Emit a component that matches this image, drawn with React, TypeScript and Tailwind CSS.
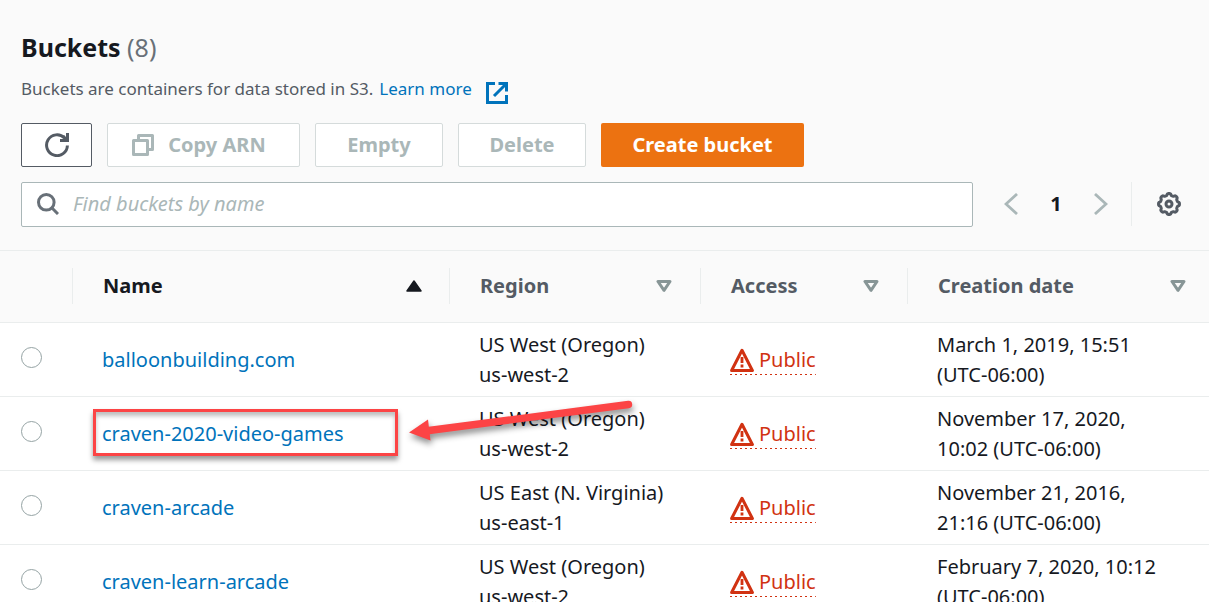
import React from "react";

type Bucket = { name: string; region: string; code: string; created: [string, string]; highlighted?: boolean };

const buckets: Bucket[] = [
  { name: "balloonbuilding.com", region: "US West (Oregon)", code: "us-west-2", created: ["March 1, 2019, 15:51", "(UTC-06:00)"] },
  { name: "craven-2020-video-games", region: "US West (Oregon)", code: "us-west-2", created: ["November 17, 2020,", "10:02 (UTC-06:00)"], highlighted: true },
  { name: "craven-arcade", region: "US East (N. Virginia)", code: "us-east-1", created: ["November 21, 2016,", "21:16 (UTC-06:00)"] },
  { name: "craven-learn-arcade", region: "US West (Oregon)", code: "us-west-2", created: ["February 7, 2020, 10:12", "(UTC-06:00)"] },
];

function RefreshIcon() {
  return (
    <svg className="size-6" viewBox="0 0 24 24" fill="none" stroke="#545b64" strokeWidth="3" aria-hidden="true">
      <path d="M22.4 12.5A10.4 10.4 0 1 1 19.500 5" />
      <path d="M22.500 0V7.500H15" />
      <path d="M18 3L22 7.500" />
    </svg>
  );
}

function CopyIcon() {
  return (
    <svg className="size-[22px] shrink-0" viewBox="0 0 22 22" fill="none" stroke="#aab7b8" strokeWidth="3" strokeLinejoin="round" aria-hidden="true">
      <rect x="1.5" y="6.5" width="14" height="14" />
      <path d="M6.5 6V1.5h14v14H16" />
    </svg>
  );
}

function ExternalIcon() {
  return (
    <svg className="size-[22px]" viewBox="0 0 22 22" fill="none" stroke="#0073bb" strokeWidth="3" aria-hidden="true">
      <path d="M9 1.5H1.5v19h19V13" />
      <path d="M12.5 1.5h8V9.500M20 2L8 14" />
    </svg>
  );
}

function SearchIcon() {
  return (
    <svg className="size-[22px] shrink-0" viewBox="0 0 22 22" fill="none" stroke="#687078" strokeWidth="3" aria-hidden="true">
      <circle cx="9.300" cy="9.300" r="7.800" />
      <path d="M14.800 14.800L21 21" />
    </svg>
  );
}

function Chevron({ right = false }: { right?: boolean }) {
  return (
    <svg className="h-[22px] w-[14px]" viewBox="0 0 14 22" fill="none" stroke="#aab7b8" strokeWidth="2.8" aria-hidden="true">
      <path d={right ? "M1 1L12 11L1 21" : "M13 1L2 11L13 21"} />
    </svg>
  );
}

function GearIcon() {
  const points = Array.from({ length: 120 }, (_, i) => {
    const a = (i / 120) * Math.PI * 2;
    const r = 9.6 + 0.9 * Math.tanh(2 * Math.cos(a * 8));
    return `${(12 + r * Math.cos(a)).toFixed(2)},${(12 + r * Math.sin(a)).toFixed(2)}`;
  }).join(" ");
  return (
    <svg className="size-6" viewBox="0 0 24 24" fill="none" stroke="#545b64" strokeWidth="3" strokeLinejoin="round" aria-hidden="true">
      <polygon points={points} />
      <circle cx="12" cy="12" r="3" />
    </svg>
  );
}

function SortIcon({ ascending = false }: { ascending?: boolean }) {
  return (
    <svg className="h-[12px] w-4" viewBox="0 0 16 12" strokeLinejoin="round" aria-hidden="true">
      {ascending ? (
        <path d="M8 1L15 11H1Z" fill="#16191f" stroke="#16191f" strokeWidth="1.500" />
      ) : (
        <path d="M2 1.500H14L8 10.300Z" fill="none" stroke="#879596" strokeWidth="3" />
      )}
    </svg>
  );
}

function WarningIcon() {
  return (
    <svg className="size-6" viewBox="0 0 24 24" fill="none" stroke="#d13212" aria-hidden="true">
      <path d="M12 2.300L22.400 22.500H1.600Z" strokeWidth="3" strokeLinejoin="round" />
      <path d="M12 9V15M12 16.500V19.500" strokeWidth="2.800" />
    </svg>
  );
}

function Pointer() {
  return (
    <>
      <span className="pointer-events-none absolute top-[12px] left-[20px] z-10 h-[47px] w-[305px] border-3 border-[#fc4445] shadow-[0_4px_5px_rgba(0,0,0,0.4),inset_0_4px_4px_rgba(0,0,0,0.25)]" />
      <svg className="pointer-events-none absolute top-0 left-[330px] z-10 h-[60px] w-[240px] drop-shadow-[1px_4px_3px_rgba(0,0,0,0.45)]" viewBox="0 0 240 60" aria-hidden="true">
        <path d="M26 33.500L225.500 7.500" stroke="#fc4445" strokeWidth="7.400" strokeLinecap="round" />
        <path d="M6 35.500L25 22.500L27.500 43.500Z" fill="#fc4445" />
      </svg>
    </>
  );
}

const disabledButton = "flex h-11 items-center justify-center rounded-xs border border-[#d5dbdb] bg-white text-xl font-bold whitespace-nowrap text-[#aab7b8]";

const columns = [
  { label: "Name", width: "w-[377px]", inner: "border-r pr-[27px]", ascending: true },
  { label: "Region", width: "w-[251px]", inner: "border-r pr-7" },
  { label: "Access", width: "w-[207px]", inner: "border-r pr-7" },
  { label: "Creation date", width: "", inner: "pr-[23px]" },
];

export default function App() {
  return (
    <main className="min-h-screen bg-white font-['Noto_Sans',sans-serif] text-[#16191f]">
      <header className="border-b border-[#eaeded] bg-[#fafafa] px-[21px] pt-[27px] pb-6">
        <h1 className="text-[25px] leading-10 font-bold">
          Buckets <span className="font-normal text-[#687078]">(8)</span>
        </h1>
        <p className="mt-2 flex h-7 items-center text-[17px] text-[#545b64]">
          Buckets are containers for data stored in S3.
          <a href="#learn-more" className="ml-[6px] flex items-center gap-[14px] text-[#0073bb]">
            Learn more <span className="pt-2"><ExternalIcon /></span>
          </a>
        </p>
        <div className="mt-5 flex gap-[15px]">
          <button type="button" aria-label="Refresh" className="flex h-11 w-[71px] items-center justify-center rounded-xs border border-[#545b64] bg-white">
            <RefreshIcon />
          </button>
          <button type="button" disabled className={`${disabledButton} w-[193px] gap-[14px] pr-[9px]`}>
            <CopyIcon /> Copy ARN
          </button>
          <button type="button" disabled className={`${disabledButton} w-32`}>Empty</button>
          <button type="button" disabled className={`${disabledButton} w-32`}>Delete</button>
          <button type="button" className="h-11 w-[203px] rounded-xs bg-[#ec7211] text-xl font-bold text-white">Create bucket</button>
        </div>
        <div className="mt-[15px] flex h-11 items-center">
          <label className="flex h-[45px] flex-1 items-center gap-[14px] rounded-xs border border-[#aab7b8] bg-white px-[15px]">
            <SearchIcon />
            <input type="search" aria-label="Find buckets by name" placeholder="Find buckets by name" className="min-w-0 flex-1 text-xl outline-none placeholder:text-[#aab7b8] placeholder:italic" />
          </label>
          <nav aria-label="Pagination" className="ml-[31px] flex items-center">
            <button type="button" aria-label="Previous page" disabled><Chevron /></button>
            <button type="button" aria-current="page" className="w-[76px] text-xl font-bold">1</button>
            <button type="button" aria-label="Next page" disabled><Chevron right /></button>
          </nav>
          <div className="ml-[23px] flex h-11 items-center border-l border-[#eaeded] pr-[7px] pl-[25px]">
            <button type="button" aria-label="Preferences"><GearIcon /></button>
          </div>
        </div>
      </header>

      <table className="w-full table-fixed border-separate border-spacing-0 text-left text-xl">
        <thead className="bg-[#fafafa]">
          <tr>
            <th className="h-[72px] w-[73px] border-b border-[#eaeded] p-0 pb-[2px]">
              <div className="h-9 border-r border-[#eaeded]" />
            </th>
            {columns.map((c) => (
              <th key={c.label} scope="col" aria-sort={c.ascending ? "ascending" : undefined} className={`h-[72px] border-b border-[#eaeded] p-0 pb-[2px] ${c.width}`}>
                <div className={`flex h-9 items-center justify-between border-[#eaeded] pl-[30px] ${c.inner} ${c.ascending ? "text-[#16191f]" : "text-[#545b64]"}`}>
                  {c.label}
                  <button type="button" aria-label={`Sort by ${c.label}`}><SortIcon ascending={c.ascending} /></button>
                </div>
              </th>
            ))}
          </tr>
        </thead>
        <tbody>
          {buckets.map((b) => (
            <tr key={b.name} className="[&>td]:h-[74px] [&>td]:border-b [&>td]:border-[#eaeded] [&>td]:p-0 [&>td]:leading-[30px]">
              <td>
                <input type="radio" name="bucket" aria-label={b.name} className="mb-1 ml-[21px] block size-[21px] appearance-none rounded-full border border-[#95a3a4] bg-white checked:border-[6px] checked:border-[#0073bb]" />
              </td>
              <td className="relative">
                <a href={`#${b.name}`} className="ml-[29px] text-[#0073bb]">{b.name}</a>
                {b.highlighted && <Pointer />}
              </td>
              <td><div className="pl-[29px]">{b.region}<br />{b.code}</div></td>
              <td>
                <span className="ml-[29px] inline-flex h-[30px] items-center gap-[5px] bg-[repeating-linear-gradient(90deg,#d13212_0_2px,transparent_2px_5px)] bg-[length:100%_1px] bg-bottom bg-no-repeat align-middle text-[#d13212]">
                  <WarningIcon /> Public
                </span>
              </td>
              <td><div className="pl-[29px] whitespace-nowrap">{b.created[0]}<br />{b.created[1]}</div></td>
            </tr>
          ))}
        </tbody>
      </table>
    </main>
  );
}
